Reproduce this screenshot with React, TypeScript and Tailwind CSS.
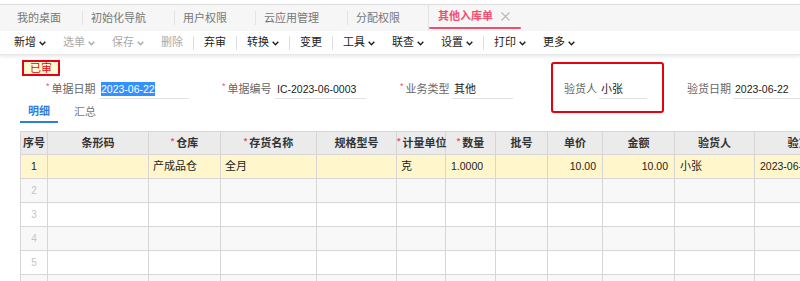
import React from "react";

const Chevron = () => (
  <svg width="7" height="5" viewBox="0 0 7 5" className="ml-[3px] mt-[1px]">
    <path d="M0.7 0.8 L3.5 3.7 L6.3 0.8" fill="none" stroke="currentColor" strokeWidth="1.5" />
  </svg>
);

const tabs = [
  { label: "我的桌面", w: "w-[65px]" },
  { label: "初始化导航", w: "w-[92px]" },
  { label: "用户权限", w: "w-[81px]" },
  { label: "云应用管理", w: "w-[92px]" },
  { label: "分配权限", w: "w-[81px]" },
];

const tools = [
  { label: "新增", caret: true },
  { label: "选单", caret: true, off: true },
  { label: "保存", caret: true, off: true },
  { label: "删除", off: true },
  { sep: true },
  { label: "弃审" },
  { sep: true },
  { label: "转换", caret: true },
  { sep: true },
  { label: "变更" },
  { sep: true },
  { label: "工具", caret: true },
  { label: "联查", caret: true },
  { label: "设置", caret: true },
  { sep: true },
  { label: "打印", caret: true },
  { label: "更多", caret: true },
];

const cols = [
  { t: "序号", w: 27 },
  { t: "条形码", w: 101 },
  { t: "仓库", w: 72, req: true },
  { t: "存货名称", w: 96, req: true },
  { t: "规格型号", w: 80 },
  { t: "计量单位", w: 49, req: true },
  { t: "数量", w: 50, req: true },
  { t: "批号", w: 52 },
  { t: "单价", w: 55 },
  { t: "金额", w: 72 },
  { t: "验货人", w: 80 },
  { t: "验货日期", w: 110 },
];

const Star = () => <span className="text-[#f0506e] text-[9px] mr-[2px] relative -top-[3px]">*</span>;

const Field = ({ label, value, req, labelW, inputW, selected, num }: { label: string; value: string; req?: boolean; labelW: string; inputW: string; selected?: boolean; num?: boolean }) => (
  <div className="flex items-center h-[19px] whitespace-nowrap">
    <div className={`flex items-center shrink-0 text-[#666] ${labelW}`}>
      {req ? <Star /> : null}
      {label}
    </div>
    <div className={`${inputW} shrink-0 h-[19px] border-b border-[#e2e2e2] flex items-center pl-[2px] text-[#222] ${num ? "text-[10.5px]" : ""}`}>
      {selected ? <span className="bg-[#3390ff] text-white leading-[14px]">{value}</span> : value}
    </div>
  </div>
);

const cell = "border border-[#d6d6d6] whitespace-nowrap overflow-hidden";

export default function App() {
  return (
    <div className="w-[800px] h-[281px] overflow-hidden bg-white text-[11px] leading-none" style={{ fontFamily: '"Liberation Sans", "Noto Sans CJK SC", sans-serif' }}>
      {/* tab bar */}
      <div className="pt-[4px]">
        <div className="h-[27px] border-t border-[#dcdcdc] bg-[#f6f6f6] flex items-stretch pl-[17px]">
          {tabs.map((t, i) => (
            <div key={t.label} className={`${t.w} flex items-center text-[#777] ${i > 0 ? "pl-[8px] border-l border-[#e3e3e3] my-[6px]" : ""}`}>
              {t.label}
            </div>
          ))}
          <div className="w-[93px] flex flex-col border-l border-[#e3e3e3]">
            <div className="flex-1 flex items-center pl-[9px] text-[#f0506e] font-bold pt-[1px]">
              其他入库单
              <svg width="9" height="9" viewBox="0 0 9 9" className="ml-[8px]">
                <path d="M0.5 0.5 L8.5 8.5 M8.5 0.5 L0.5 8.5" stroke="#b8b8b8" strokeWidth="1.1" />
              </svg>
            </div>
            <div className="h-[2px] bg-[#f0506e] rounded-full mb-[2px]" />
          </div>
        </div>
      </div>

      {/* toolbar */}
      <div className="h-[24px] bg-white flex items-center pl-[14px] gap-[17px] border-b border-[#e6e6e6] shadow-[0_2px_3px_rgba(0,0,0,0.08)]">
        {tools.map((b, i) =>
          b.sep ? (
            <div key={i} className="w-px h-[14px] bg-[#dedede] -mx-[7px]" />
          ) : (
            <div key={i} className={`flex items-center ${b.off ? "text-[#aaa]" : "text-[#222]"}`}>
              {b.label}
              {b.caret ? <Chevron /> : null}
            </div>
          )
        )}
      </div>

      {/* stamp */}
      <div className="pl-[22px] pt-[5px]">
        <div className="w-[38px] h-[16px] border-2 border-[#e60012] bg-[#fffbd0] text-[#e60012] flex items-center justify-center">已审</div>
      </div>

      {/* header form */}
      <div className="flex items-center mt-[4px] pl-[46px]">
        <Field label="单据日期" value="2023-06-22" req labelW="w-[53px]" inputW="w-[90px]" selected num />
        <div className="ml-[33px]">
          <Field label="单据编号" value="IC-2023-06-0003" req labelW="w-[53px]" inputW="w-[91px]" num />
        </div>
        <div className="ml-[34px]">
          <Field label="业务类型" value="其他" req labelW="w-[52px]" inputW="w-[61px]" />
        </div>
        <div className="ml-[51px] relative">
          <Field label="验货人" value="小张" labelW="w-[35px]" inputW="w-[48px]" />
          <div className="absolute -left-[13px] -right-[17px] -top-[18px] -bottom-[14px] border-2 border-[#e60012] rounded-[3px] pointer-events-none" />
        </div>
        <div className="ml-[40px]">
          <Field label="验货日期" value="2023-06-22" labelW="w-[46px]" inputW="w-[80px]" num />
        </div>
      </div>

      {/* detail tabs */}
      <div className="flex mt-[3px] pl-[20px] h-[21px]">
        <div className="w-[38px] flex items-center justify-center border-b-2 border-[#2f7de1] text-[#2f7de1] font-bold">明细</div>
        <div className="ml-[15px] w-[24px] flex items-center justify-center text-[#777]">汇总</div>
      </div>

      {/* grid */}
      <div className="mt-[8px] pl-[20px]">
        <table className="table-fixed border-collapse w-[844px]">
          <colgroup>
            {cols.map((c) => (
              <col key={c.t} style={{ width: c.w }} />
            ))}
          </colgroup>
          <thead>
            <tr className="bg-[#ebebeb] h-[23px]">
              {cols.map((c) => (
                <th key={c.t} className="border border-[#d6d6d6] font-bold text-[#333] text-center whitespace-nowrap px-0">
                  {c.req ? <Star /> : null}
                  {c.t}
                </th>
              ))}
            </tr>
          </thead>
          <tbody>
            <tr className="bg-[#fff6cc] h-[24px] text-[#222]">
              <td className={`${cell} text-center text-[10.5px]`}>1</td>
              <td className={cell}></td>
              <td className={`${cell} pl-[4px]`}>产成品仓</td>
              <td className={`${cell} pl-[4px]`}>全月</td>
              <td className={cell}></td>
              <td className={`${cell} pl-[4px]`}>克</td>
              <td className={`${cell} pl-[5px] text-[10.5px]`}>1.0000</td>
              <td className={cell}></td>
              <td className={`${cell} text-right pr-[6px] text-[10.5px]`}>10.00</td>
              <td className={`${cell} text-right pr-[6px] text-[10.5px]`}>10.00</td>
              <td className={`${cell} pl-[5px]`}>小张</td>
              <td className={`${cell} pl-[5px] text-[10.5px]`}>2023-06-22</td>
            </tr>
            {[2, 3, 4, 5, 6].map((n) => (
              <tr key={n} className={`h-[24px] ${n % 2 === 0 ? "bg-[#f8f8f8]" : "bg-white"}`}>
                <td className={`${cell} text-center text-[#c4c4c4] text-[10px]`}>{n < 6 ? n : ""}</td>
                {cols.slice(1).map((c) => (
                  <td key={c.t} className={cell}></td>
                ))}
              </tr>
            ))}
          </tbody>
        </table>
      </div>
    </div>
  );
}
